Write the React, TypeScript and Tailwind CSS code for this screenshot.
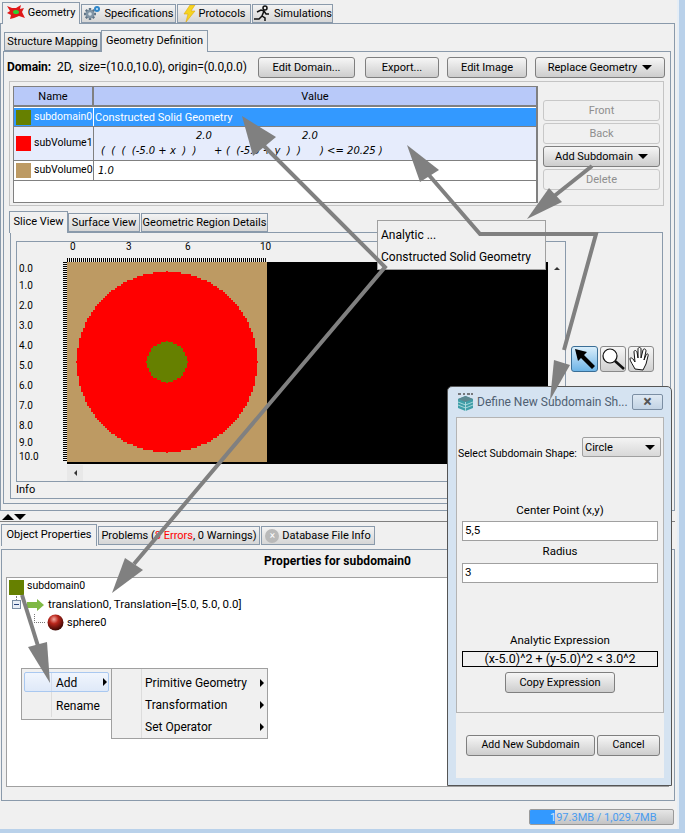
import React from "react";

const Tab = ({ active, w, icon, children }: { active?: boolean; w: string; icon?: React.ReactNode; children: React.ReactNode }) => (
  <div
    className={
      active
        ? `${w} h-[22px] relative z-10 -mb-px flex items-center justify-center gap-[3px] bg-[#f0f0f0] border border-b-0 border-[#8a9aab] pb-[2px] text-black`
        : `${w} h-[19px] flex items-center justify-center gap-[3px] border border-[#8a9aab] bg-gradient-to-b from-[#f3f3f3] to-[#d6d6d6] text-black`
    }
  >
    {icon}
    <span className="whitespace-nowrap">{children}</span>
  </div>
);

const Btn = ({ w, disabled, children }: { w: string; disabled?: boolean; children: React.ReactNode }) => (
  <div
    className={
      disabled
        ? `${w} h-[21px] shrink-0 flex items-center justify-center rounded-[3px] border border-[#c8c8c8] bg-[#f0f0f0] text-[#8e8e8e]`
        : `${w} h-[21px] shrink-0 flex items-center justify-center gap-[5px] rounded-[3px] border border-[#7f7f7f] bg-gradient-to-b from-[#f6f6f6] to-[#cdcdcd] text-black`
    }
  >
    {children}
  </div>
);

const Caret = () => <span className="w-0 h-0 border-x-[5px] border-x-transparent border-t-[5px] border-t-black" />;
const Sub = () => <span className="w-0 h-0 border-y-[4px] border-y-transparent border-l-[4px] border-l-black" />;

const Splat = () => (
  <svg width="18" height="15" viewBox="0 0 18 15">
    <polygon points="0,1 5,3 9,3 14,0 13,4 17,3 15,7 18,13 12,11 7,13 3,14 4,10 0,8 3,6" fill="#e01818" />
    <ellipse cx="9" cy="7" rx="3" ry="2" fill="#2fd02f" />
  </svg>
);
const Gear = () => (
  <svg width="18" height="17" viewBox="0 0 18 17">
    <g stroke="#5f7486" strokeWidth="2.4">
      <path d="M7 3v12M1 9h12M2.800 4.800l8.400 8.400M11.200 4.800l-8.400 8.400" />
    </g>
    <circle cx="7" cy="9" r="4.300" fill="#7f93a4" />
    <circle cx="7" cy="9" r="1.800" fill="#d9e2e8" />
    <circle cx="14" cy="4" r="3" fill="#2f86c9" />
    <circle cx="14" cy="4" r="1" fill="#cfe8fa" />
  </svg>
);
const Bolt = () => (
  <svg width="13" height="17" viewBox="0 0 13 17">
    <polygon points="7,0 12,0 8,6 12,6 3,17 5,9 1,9" fill="#f5d421" stroke="#e0a80f" strokeWidth="0.6" />
  </svg>
);
const Runner = () => (
  <svg width="18" height="17" viewBox="0 0 18 17" fill="none" stroke="#111" strokeWidth="1.500">
    <circle cx="12" cy="3" r="2" />
    <path d="M4 7l4-2 3 1-2 5 3 2v3M9 11l-3 3H1M11 6l2 3h3" />
  </svg>
);
const ArrowTool = () => (
  <svg width="24" height="24" viewBox="0 0 24 24">
    <polygon points="2,2 14,5 11,8 22,19 19,22 8,11 5,14" fill="#000" />
  </svg>
);
const Lens = () => (
  <svg width="24" height="24" viewBox="0 0 24 24" fill="none">
    <circle cx="9" cy="9" r="7" fill="#fff" stroke="#111" strokeWidth="1.200" />
    <path d="M14 14l9 8" stroke="#111" strokeWidth="2.600" />
  </svg>
);
const Hand = () => (
  <svg width="24" height="24" viewBox="0 0 24 24" fill="#fff" stroke="#111" strokeWidth="1">
    <path d="M6 22C4 18 1 14 1 12c0-2 2-1 3 0l2 3-1-10c0-2 2-2 3 0l1 6 0-9c0-2 3-2 3 0l0 9 2-8c1-2 3-1 3 1l-2 9 2-5c1-2 3-1 2 1l-2 8c-1 2-2 4-3 6z" />
  </svg>
);
const CubeLogo = () => (
  <svg width="17" height="18" viewBox="0 0 17 18">
    <polygon points="8.500,3 16,6 16,15 8.500,18 1,15 1,6" fill="#3f9ea8" />
    <path d="M1 9l7.500 3L16 9M1 12l7.500 3L16 12M8.500 9v9" stroke="#bfe3e6" strokeWidth="0.800" fill="none" />
    <polygon points="8.500,3 16,6 8.500,9 1,6" fill="#5d8890" />
    <path d="M1 1h3M6 1h2M10 1h3M14 1h2" stroke="#555" strokeWidth="1.500" />
  </svg>
);

function sliceRects() {
  const rows: { y: number; x: number; w: number; c: string }[] = [];
  for (let j = 0; j < 100; j++) {
    const dy = (j + 0.5 - 50) / 10;
    const r1 = dy * dy <= 20.25 ? Math.sqrt(20.25 - dy * dy) : 0;
    if (r1 > 0) rows.push({ y: j * 2, x: 100 - Math.round(r1 * 10) * 2, w: Math.round(r1 * 10) * 4, c: "#ff0000" });
    const r2 = dy * dy <= 1 ? Math.sqrt(1 - dy * dy) : 0;
    if (r2 > 0) rows.push({ y: j * 2, x: 100 - Math.round(r2 * 10) * 2, w: Math.round(r2 * 10) * 4, c: "#668000" });
  }
  return rows;
}

const SliceImage = () => (
  <svg width="200" height="200" viewBox="0 0 200 200" shapeRendering="crispEdges" className="shrink-0 block">
    <rect width="200" height="200" fill="#bd9a63" />
    {sliceRects().map((r, i) => (
      <rect key={i} x={r.x} y={r.y} width={r.w} height="2" fill={r.c} />
    ))}
    <rect x="99" y="9" width="2" height="2" fill="#ff0000" />
    <rect x="99" y="189" width="2" height="2" fill="#ff0000" />
    <rect x="9" y="99" width="2" height="2" fill="#ff0000" />
    <rect x="189" y="99" width="2" height="2" fill="#ff0000" />
    <rect x="79" y="99" width="2" height="2" fill="#668000" />
    <rect x="119" y="99" width="2" height="2" fill="#668000" />
    <rect x="99" y="79" width="2" height="2" fill="#668000" />
    <rect x="99" y="119" width="2" height="2" fill="#668000" />
  </svg>
);

const RulerTop = () => (
  <svg width="200" height="4" shapeRendering="crispEdges" className="block">
    {Array.from({ length: 100 }).map((_, i) => (
      <rect key={i} x={i * 2} y="0" width="1" height="4" fill="#000" />
    ))}
  </svg>
);
const RulerLeft = () => (
  <svg width="4" height="200" shapeRendering="crispEdges" className="block shrink-0">
    {Array.from({ length: 100 }).map((_, i) => (
      <rect key={i} x="0" y={i * 2} width="4" height="1" fill="#000" />
    ))}
  </svg>
);

const yLabels: [string, string][] = [
  ["0.0", "h-[14px]"],
  ["1.0", "h-[20px]"],
  ["2.0", "h-[20px]"],
  ["3.0", "h-[20px]"],
  ["4.0", "h-[20px]"],
  ["5.0", "h-[20px]"],
  ["6.0", "h-[20px]"],
  ["7.0", "h-[20px]"],
  ["8.0", "h-[20px]"],
  ["9.0", "h-[14px]"],
  ["10.0", "h-[14px]"],
];

const Arrows = () => (
  <svg width="685" height="833" className="absolute left-0 top-0 z-40 pointer-events-none">
    <g fill="#808080" stroke="none">
      <polygon points="527,219 549,188 562,202" />
      <polygon points="407,145 420,182 439,170" />
      <polygon points="550,400 554,360 570,365" />
      <polygon points="242,116 276,137 253,156" />
      <polygon points="112,593 143,570 125,558" />
      <polygon points="50,683 28,647 47,642" />
    </g>
    <g fill="none" stroke="#808080" strokeWidth="4">
      <path d="M592 166L553 197" />
      <path d="M428 174L480 234H596L564 350" />
      <path d="M262 144L385 267L134 564" />
      <path d="M22 595L38 646" />
    </g>
  </svg>
);

export default function App() {
  return (
    <div
      className="relative w-[685px] h-[833px] overflow-hidden flex flex-col bg-[#b9d1ea] text-[11px] leading-none text-black"
      style={{ fontFamily: 'Roboto, Tahoma, sans-serif' }}
    >
      <div className="flex-1 flex min-h-0">
        <div className="w-[679px] flex flex-col bg-[#f0f0f0] border-r-2 border-[#e6eef6]">
          {/* top tabs */}
          <div className="h-[23px] shrink-0 flex items-end pl-[2px] gap-px">
            <Tab active w="w-[78px]" icon={<Splat />}>Geometry</Tab>
            <Tab w="w-[95px]" icon={<Gear />}>Specifications</Tab>
            <Tab w="w-[74px]" icon={<Bolt />}>Protocols</Tab>
            <Tab w="w-[81px]" icon={<Runner />}>Simulations</Tab>
          </div>

          {/* main panel */}
          <div className="h-[488px] shrink-0 w-[675px] border border-[#8a9aab] pl-[2px] pt-[5px] pb-[6px] pr-[3px] flex flex-col">
            <div className="h-[22px] shrink-0 flex items-end pl-[1px]">
              <Tab w="w-[97px]">Structure Mapping</Tab>
              <Tab active w="w-[107px]">Geometry Definition</Tab>
            </div>
            <div className="flex-1 border border-[#8a9aab] pl-[5px] pr-[5px] flex flex-col">
              {/* domain row */}
              <div className="h-[29px] shrink-0 flex items-center pt-[1px]">
                <div className="w-[249px] shrink-0 whitespace-nowrap -ml-[2px] mr-[2px] text-[12px] tracking-[-0.1px]">
                  <b className="mr-[6px]">Domain:</b>
                  <span>2D,&nbsp; size=(10.0,10.0), origin=(0.0,0.0)</span>
                </div>
                <Btn w="w-[97px]">Edit Domain...</Btn>
                <div className="w-[10px]" />
                <Btn w="w-[74px]">Export...</Btn>
                <div className="w-[8px]" />
                <Btn w="w-[80px]">Edit Image</Btn>
                <div className="w-[8px]" />
                <Btn w="w-[130px]">Replace Geometry <Caret /></Btn>
              </div>

              {/* table container */}
              <div className="h-[125px] shrink-0 w-[655px] border border-[#c4c4c4] pl-[3px] pt-[4px] flex">
                <div className="w-[525px] h-[117px] shrink-0 border border-[#808080] border-r-2 bg-white flex flex-col">
                  <div className="h-[20px] flex bg-[#b8c9f9] border-b-2 border-[#808080]">
                    <div className="w-[80px] flex items-center justify-center border-r-2 border-[#808080]">Name</div>
                    <div className="flex-1 flex items-center justify-center">Value</div>
                  </div>
                  <div className="h-[20px] flex bg-[#3399ff] text-white border-t border-b border-t-white border-b-[#808080]">
                    <div className="w-[80px] shrink-0 flex items-center gap-[3px] pl-[2px] border-r border-white text-[10.5px] whitespace-nowrap">
                      <span className="w-[15px] h-[15px] shrink-0 bg-[#668000]" />
                      <span>subdomain0</span>
                    </div>
                    <div className="flex-1 flex items-center pl-[1px]">Constructed Solid Geometry</div>
                  </div>
                  <div className="h-[34px] flex bg-[#e6ecfc] border-b border-[#808080]">
                    <div className="w-[80px] shrink-0 flex items-center gap-[3px] pl-[2px] border-r border-[#808080] text-[10.5px] whitespace-nowrap">
                      <span className="w-[15px] h-[15px] shrink-0 bg-[#ff0000]" />
                      <span>subVolume1</span>
                    </div>
                    <div className="flex-1 flex flex-col justify-center pl-[7px] text-[10px] italic whitespace-pre" style={{ fontFamily: '"DejaVu Sans", sans-serif' }}>
                      <div className="flex h-[15px] items-center">
                        <span className="w-[95px]" />
                        <span className="w-[106px]">2.0</span>
                        <span>2.0</span>
                      </div>
                      <div className="flex h-[15px] items-center">
                        <span className="w-[113px]">(  (  (  (-5.0 + x  )  )</span>
                        <span className="w-[12px]">+</span>
                        <span className="w-[94px]">(  (-5.0 + y  )  )</span>
                        <span>) {"<="} 20.25 )</span>
                      </div>
                    </div>
                  </div>
                  <div className="h-[20px] flex border-b border-[#808080]">
                    <div className="w-[80px] shrink-0 flex items-center gap-[3px] pl-[2px] border-r border-[#808080] text-[10.5px] whitespace-nowrap">
                      <span className="w-[15px] h-[15px] shrink-0 bg-[#bd9a63]" />
                      <span>subVolume0</span>
                    </div>
                    <div className="flex-1 flex items-center pl-[4px] text-[10px] italic" style={{ fontFamily: '"DejaVu Sans", sans-serif' }}>1.0</div>
                  </div>
                </div>
                <div className="ml-[5px] pt-[14px] flex flex-col gap-[2px] w-[117px]">
                  <Btn w="w-[117px]" disabled>Front</Btn>
                  <Btn w="w-[117px]" disabled>Back</Btn>
                  <Btn w="w-[117px]">Add Subdomain <Caret /></Btn>
                  <Btn w="w-[117px]" disabled>Delete</Btn>
                </div>
              </div>

              {/* slice tabs */}
              <div className="h-[26px] shrink-0 flex items-end">
                <Tab active w="w-[59px]">Slice View</Tab>
                <Tab w="w-[72px]">Surface View</Tab>
                <div className="w-px" />
                <Tab w="w-[127px]">Geometric Region Details</Tab>
              </div>
              <div className="h-[267px] shrink-0 ml-px w-[653px] border border-[#8a9aab] pl-[5px] pt-[8px] flex">
                <div className="flex flex-col shrink-0 w-[550px]">
                  <div className="h-[241px] border border-[#8a9aab] flex shrink-0">
                    <div className="w-[531px] flex flex-col">
                      <div className="h-[20px] shrink-0 pl-[50px] flex flex-col justify-end">
                        <div className="h-[16px] flex items-start text-[10px] pl-[3px]">
                          <span className="w-[56px]">0</span>
                          <span className="w-[59px]">3</span>
                          <span className="w-[75px]">6</span>
                          <span>10</span>
                        </div>
                        <RulerTop />
                      </div>
                      <div className="flex h-[202px] shrink-0">
                        <div className="w-[46px] pl-[2px] shrink-0 flex flex-col text-[10px]">
                          {yLabels.map(([t, h]) => (
                            <div key={t} className={`${h} flex items-center shrink-0`}>{t}</div>
                          ))}
                        </div>
                        <RulerLeft />
                        <div className="flex flex-col shrink-0 bg-black">
                          <SliceImage />
                        </div>
                        <div className="flex-1 bg-black" />
                      </div>
                      <div className="flex-1 pl-[50px] flex items-center">
                        <div className="w-[16px] h-[16px] flex items-center justify-center bg-[#e8e8e8]">
                          <span className="w-0 h-0 border-y-[3px] border-y-transparent border-r-[3px] border-r-[#333]" />
                        </div>
                      </div>
                    </div>
                    <div className="flex-1 flex flex-col items-center pt-[25px]">
                      <span className="w-0 h-0 border-x-[3px] border-x-transparent border-b-[3px] border-b-[#333]" />
                    </div>
                  </div>
                  <div className="h-[15px] flex items-center">Info</div>
                </div>
                <div className="pl-[5px] pt-[105px] flex gap-[2px] items-start">
                  <div className="w-[27px] h-[26px] flex items-center justify-center rounded-[3px] border border-[#3a6e96] bg-gradient-to-b from-[#d9eefb] to-[#6db4e6]"><ArrowTool /></div>
                  <div className="w-[26px] h-[26px] flex items-center justify-center rounded-[3px] border border-[#8a8a8a] bg-gradient-to-b from-[#f6f6f6] to-[#d0d0d0]"><Lens /></div>
                  <div className="w-[26px] h-[26px] flex items-center justify-center rounded-[3px] border border-[#8a8a8a] bg-gradient-to-b from-[#f6f6f6] to-[#d0d0d0]"><Hand /></div>
                </div>
              </div>
            </div>
          </div>

          {/* splitter */}
          <div className="h-[11px] shrink-0 flex items-start pl-[2px] pt-[3px] gap-0 border-b border-[#808080] w-[675px]">
            <span className="w-0 h-0 border-x-[6px] border-x-transparent border-b-[6px] border-b-black" />
            <span className="w-0 h-0 border-x-[6px] border-x-transparent border-t-[6px] border-t-black" />
          </div>

          {/* bottom tabs */}
          <div className="h-[23px] mt-0 shrink-0 flex items-end pl-[1px] gap-px">
            <Tab active w="w-[96px]">Object Properties</Tab>
            <Tab w="w-[162px]">
              Problems (<span className="text-[#ff0000]">8 Errors</span>, 0 Warnings)
            </Tab>
            <Tab
              w="w-[114px]"
              icon={
                <span className="w-[14px] h-[14px] rounded-full bg-[#b9b9b9] flex items-center justify-center text-white text-[10px]">×</span>
              }
            >
              Database File Info
            </Tab>
          </div>
          <div className="h-[252px] mt-[4px] shrink-0 ml-px w-[674px] border border-[#8a9aab] pl-[4px] pr-[5px] flex flex-col">
            <div className="h-[27px] shrink-0 flex items-start pt-[5px] justify-center font-bold text-[12px] tracking-[0.1px]">Properties for subdomain0</div>
            <div className="h-[210px] border border-[#a0a0a0] bg-white pl-[2px] pt-px flex flex-col">
              <div className="h-[16px] flex items-center gap-[3px] text-[10.5px]">
                <span className="w-[15px] h-[15px] shrink-0 bg-[#668000]" />
                <span className="-mt-[2px]">subdomain0</span>
              </div>
              <div className="h-[19px] flex items-center pl-[3px] text-[11.5px]">
                <span className="relative w-[9px] h-[9px] border border-[#7a8da3] flex items-center justify-center bg-[#e8eef6]">
                  <span className="absolute -top-[5px] left-[3px] h-[4px] border-l border-dotted border-[#777]" />
                  <span className="w-[5px] h-px bg-[#26417a]" />
                </span>
                <svg width="18" height="12" viewBox="0 0 18 12" className="ml-[6px]">
                  <polygon points="0,3 10,3 10,0 17,6 10,12 10,9 0,9" fill="#7fb944" />
                </svg>
                <span className="ml-[3px]">translation0, Translation=[5.0, 5.0, 0.0]</span>
              </div>
              <div className="h-[16px] flex items-center pl-[25px]">
                <span className="relative w-[11px] border-t border-dotted border-[#777]">
                  <span className="absolute -top-[9px] left-0 h-[9px] border-l border-dotted border-[#777]" />
                </span>
                <svg width="17" height="17" viewBox="0 0 17 17" className="ml-[2px]">
                  <defs>
                    <radialGradient id="s" cx="0.400" cy="0.300" r="0.700">
                      <stop offset="0" stopColor="#f6a9a0" />
                      <stop offset="0.400" stopColor="#b9261c" />
                      <stop offset="1" stopColor="#3c0703" />
                    </radialGradient>
                  </defs>
                  <circle cx="8.500" cy="8.500" r="8" fill="url(#s)" />
                </svg>
                <span className="ml-[3px]">sphere0</span>
              </div>
            </div>
          </div>

          {/* status bar */}
          <div className="flex-1 flex items-start justify-end pt-[8px] pr-[3px]">
            <div className="relative w-[145px] h-[16px] rounded-[2px] border border-[#9a9a9a] bg-gradient-to-b from-[#e6e6e6] to-[#c4c4c4] overflow-hidden flex items-center pl-[20px] text-[#4a9cf0]">
              <span className="absolute left-0 top-0 bottom-0 w-[25px] bg-[#3399ff]" />
              <span className="relative whitespace-nowrap"><span className="text-[#cfe6ff]">1</span>97.3MB / 1,029.7MB</span>
            </div>
          </div>
        </div>
      </div>
      <div className="h-[4px] shrink-0" />

      {/* analytic popup */}
      <div className="absolute z-20 left-[377px] top-[220px] w-[169px] h-[50px] bg-[#f0f0f0] border border-[#a0a0a0] flex flex-col pt-[3px] pl-[3px] text-[12px]">
        <div className="h-[22px] flex items-center">Analytic ...</div>
        <div className="h-[22px] flex items-center">Constructed Solid Geometry</div>
      </div>

      {/* context menus */}
      <div className="absolute z-20 left-[21px] top-[668px] w-[91px] h-[52px] bg-[#f0f0f0] border border-[#a0a0a0] p-[2px] flex flex-col text-[12px]">
        <div className="h-[21px] mt-px rounded-[2px] border border-[#a9c8f0] bg-gradient-to-b from-[#f0f5fd] to-[#dfe9f8] flex items-center justify-between pl-[26px] pr-[1px]">
          <span className="h-full pl-[4px] pt-px flex items-center border-l border-[#d2dcec]">Add</span> <Sub />
        </div>
        <div className="h-[26px] flex items-center ml-[27px] pl-[4px] pt-[3px] border-l border-[#dcdcdc]">Rename</div>
      </div>
      <div className="absolute z-20 left-[111px] top-[668px] w-[157px] h-[71px] bg-[#f0f0f0] border border-[#a0a0a0] pr-[3px] flex flex-col text-[12px]">
        <div className="flex-1 ml-[29px] pl-[3px] pt-[3px] border-l border-[#dcdcdc] flex flex-col">
          <div className="h-[22px] flex items-center justify-between">Primitive Geometry <Sub /></div>
          <div className="h-[22px] flex items-center justify-between">Transformation <Sub /></div>
          <div className="h-[22px] flex items-center justify-between">Set Operator <Sub /></div>
        </div>
      </div>

      {/* dialog */}
      <div className="absolute z-30 left-[447px] top-[386px] w-[225px] h-[400px] rounded-t-[5px] border border-[#555] bg-[#d5e3f1] flex flex-col pl-[8px] pr-[7px] pb-[7px]">
        <div className="h-[30px] shrink-0 flex items-center text-[#4f5f72] gap-[3px] pl-px text-[12px]">
          <CubeLogo />
          <span className="flex-1 whitespace-nowrap overflow-hidden">Define New Subdomain Sh...</span>
          <span className="w-[31px] h-[16px] shrink-0 mr-px rounded-[2px] border border-[#7b8ea3] bg-gradient-to-b from-[#dfe9f3] to-[#c2d3e4] flex items-center justify-center text-[16px] font-bold text-[#555]">×</span>
        </div>
        <div className="h-[296px] shrink-0 border border-[#b4b4b4] bg-[#f0f0f0] flex flex-col px-[5px] text-[11.5px]">
          <div className="h-[39px] shrink-0 flex items-end -ml-[5px] -mr-[3px] pl-px justify-between text-[10.5px]">
            <span className="mb-[-2px] whitespace-nowrap">Select Subdomain Shape:</span>
            <div className="w-[79px] h-[20px] border border-[#a0a0a0] rounded-[2px] bg-gradient-to-b from-[#f4f4f4] to-[#d8d8d8] flex items-center justify-between pl-[2px] pr-[5px] text-[11px]">
              Circle <Caret />
            </div>
          </div>
          <div className="h-[64px] shrink-0 flex items-end justify-center pb-[5px]">Center Point (x,y)</div>
          <div className="h-[20px] shrink-0 border border-[#a0a0a0] bg-white flex items-center pl-[2px]">5,5</div>
          <div className="h-[22px] shrink-0 flex items-center justify-center">Radius</div>
          <div className="h-[20px] shrink-0 border border-[#a0a0a0] bg-white flex items-center pl-[2px]">3</div>
          <div className="h-[68px] shrink-0 flex items-end justify-center pb-[5px]">Analytic Expression</div>
          <div className="h-[16px] shrink-0 border border-black bg-[#f0f0f0] flex items-center justify-center text-[12.5px]">(x-5.0)^2 + (y-5.0)^2 {"<"} 3.0^2</div>
          <div className="flex justify-center pt-[5px] text-[11px]">
            <Btn w="w-[110px]">Copy Expression</Btn>
          </div>
        </div>
        <div className="flex-1 bg-[#f0f0f0] flex items-start pt-[22px] pl-[10px] gap-[2px] text-[10.5px]">
          <Btn w="w-[129px]">Add New Subdomain</Btn>
          <Btn w="w-[63px]">Cancel</Btn>
        </div>
      </div>

      <Arrows />
    </div>
  );
}
